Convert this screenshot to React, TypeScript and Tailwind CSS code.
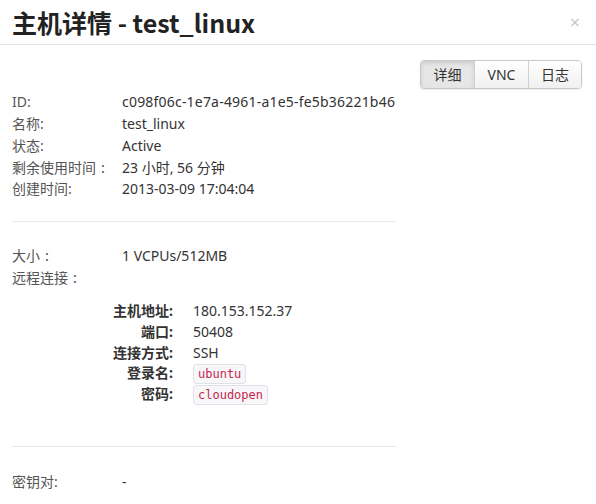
import React from "react";

const font = { fontFamily: '"Segoe UI", "Noto Sans", "Noto Sans CJK SC", sans-serif' };
const cjk = { fontFamily: '"Noto Sans CJK SC", sans-serif' };

function Row({ label, value }: { label: string; value: React.ReactNode }) {
  return (
    <div className="flex h-[21.75px] items-center">
      <div className="w-[110px] shrink-0 text-[#555]">{label}</div>
      <div className="text-[#333]">{value}</div>
    </div>
  );
}

function FwColon({ text }: { text: string }) {
  return (
    <span>
      {text}
      <span className="inline-block w-[14px] text-center" style={cjk}>:</span>
    </span>
  );
}

function SubRow({ label, value }: { label: string; value: React.ReactNode }) {
  return (
    <div className="flex h-[20.75px] items-center">
      <div className="w-[161px] shrink-0 text-right font-bold text-[#333]">{label}</div>
      <div className="ml-[20px] text-[#333]">{value}</div>
    </div>
  );
}

function Code({ children }: { children: React.ReactNode }) {
  return (
    <span
      className="inline-block rounded-[3px] border border-[#e1e1e8] bg-[#f7f7f9] px-[4px] text-[12px] leading-[18px] text-[#c7254e]"
      style={{ fontFamily: '"DejaVu Sans Mono", monospace' }}
    >
      {children}
    </span>
  );
}

export default function App() {
  return (
    <div className="h-[504px] w-[596px] overflow-hidden bg-white text-[14px]" style={font}>
      <div className="flex h-[45px] items-center justify-between border-b border-[#e5e5e5] pl-[12px] pr-[16px]">
        <h3 className="text-[25px] font-bold leading-none text-[#222]" style={cjk}>
          主机详情 - test_linux
        </h3>
        <span className="text-[18px] leading-none text-[#c8c8c8]">×</span>
      </div>
      <div className="pl-[12px] pr-[14px]">
        <div className="flex justify-end pt-[15px]">
          <div className="flex h-[29px] overflow-hidden rounded-[4px] border border-[#c9c9c9] text-[#333] shadow-[0_1px_2px_rgba(0,0,0,0.08)]">
            <div className="flex w-[53px] items-center justify-center bg-[#e6e6e6] shadow-[inset_0_2px_4px_rgba(0,0,0,0.12)]">详细</div>
            <div className="flex w-[54px] items-center justify-center border-l border-[#d0d0d0] bg-gradient-to-b from-white to-[#f0f0f0]">VNC</div>
            <div className="flex w-[53px] items-center justify-center border-l border-[#d0d0d0] bg-gradient-to-b from-white to-[#f0f0f0]">日志</div>
          </div>
        </div>
        <div className="mt-[2px] w-[384px]">
          <Row label="ID:" value={<span className="tracking-[0.2px]">c098f06c-1e7a-4961-a1e5-fe5b36221b46</span>} />
          <Row label="名称:" value="test_linux" />
          <Row label="状态:" value="Active" />
          <Row label={<FwColon text="剩余使用时间" /> as unknown as string} value="23 小时, 56 分钟" />
          <Row label="创建时间:" value="2013-03-09 17:04:04" />
          <div className="mt-[21px] border-t border-[#e8e8e8]" />
          <div className="mt-[23px]">
            <Row label={<FwColon text="大小" /> as unknown as string} value="1 VCPUs/512MB" />
            <Row label={<FwColon text="远程连接" /> as unknown as string} value="" />
          </div>
          <div className="mt-[12px]">
            <SubRow label="主机地址:" value="180.153.152.37" />
            <SubRow label="端口:" value="50408" />
            <SubRow label="连接方式:" value="SSH" />
            <SubRow label="登录名:" value={<Code>ubuntu</Code>} />
            <SubRow label="密码:" value={<Code>cloudopen</Code>} />
          </div>
          <div className="mt-[42px] border-t border-[#e8e8e8]" />
          <div className="mt-[24px]">
            <Row label="密钥对:" value="-" />
          </div>
        </div>
      </div>
    </div>
  );
}
